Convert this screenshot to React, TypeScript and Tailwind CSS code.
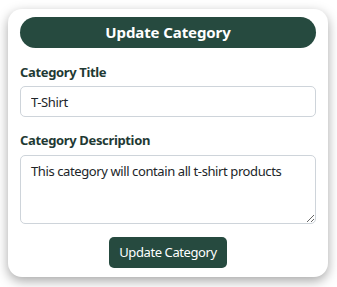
export default function App() {
  const font = { fontFamily: '"Noto Sans", "Open Sans", sans-serif' };
  return (
    <div className="w-[337px] h-[287px] bg-white pl-[8px] pt-[9px]" style={font}>
      <div className="w-[320px] h-[268px] rounded-[14px] bg-white shadow-[0_4px_12px_rgba(0,0,0,0.35)] px-[12px] pt-[8px] flex flex-col">
        <div className="h-[31px] rounded-full bg-[#264a3f] text-white font-bold text-[15px] tracking-[-0.1px] flex items-center justify-center">
          Update Category
        </div>
        <label className="mt-[14px] h-[20px] leading-[20px] text-[13px] tracking-[-0.35px] font-bold text-[#1f3a34]">Category Title</label>
        <input
          className="mt-[4px] h-[31px] w-full rounded-[5px] border border-[#ced4da] px-[10px] text-[13px] tracking-[-0.4px] text-[#212529] outline-none"
          defaultValue="T-Shirt"
        />
        <label className="mt-[13px] h-[20px] leading-[20px] text-[13px] tracking-[-0.35px] font-bold text-[#1f3a34]">Category Description</label>
        <textarea
          className="mt-[5px] h-[69px] w-full rounded-[5px] border border-[#ced4da] px-[10px] py-[5px] text-[13px] tracking-[-0.4px] leading-[20px] text-[#212529] outline-none resize-y"
          defaultValue="This category will contain all t-shirt products"
        />
        <div className="mt-[13px] flex justify-center">
          <button className="h-[31px] w-[118px] rounded-[5px] bg-[#264a3f] text-white text-[13px] tracking-[-0.4px]">
            Update Category
          </button>
        </div>
      </div>
    </div>
  );
}
